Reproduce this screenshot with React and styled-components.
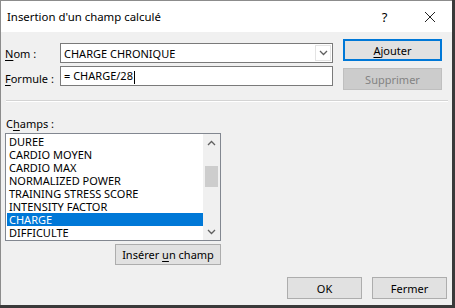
import React from "react";
import styled, { createGlobalStyle } from "styled-components";

const Global = createGlobalStyle`
  html, body { margin: 0; padding: 0; background: #3a3a3a; }
  body { font-family: "Noto Sans", "Liberation Sans", sans-serif; }
`;

const Window = styled.div`
  width: 452px;
  height: 305px;
  box-sizing: border-box;
  border-top: 1px solid #8c8c8c;
  border-left: 1px solid #8c8c8c;
  background: #f0f0f0;
  display: flex;
  flex-direction: column;
  font-size: 11px;
  color: #000;
`;

const TitleBar = styled.div`
  height: 31px;
  background: #fff;
  display: flex;
  align-items: center;
  padding-left: 6px;
`;

const Title = styled.div`
  flex: 1;
  font-size: 11.4px;
`;

const TitleButton = styled.div`
  width: 45px;
  display: flex;
  justify-content: center;
  font-size: 13px;
`;

const Body = styled.div`
  flex: 1;
  padding: 7px 0 0 4px;
  display: flex;
  flex-direction: column;
`;

const FormGrid = styled.div`
  display: grid;
  grid-template-columns: 55px 273px 99px;
  grid-template-rows: 24px 24px;
  row-gap: 3px;
  & > :nth-child(3n) { margin-left: 10px; }
`;

const Label = styled.label`
  align-self: center;
  margin-top: ${(p) => p.$mt || 0}px;
  white-space: nowrap;
`;

const U = styled.span`
  text-decoration: underline;
  text-underline-offset: 2px;
`;

const Field = styled.div`
  height: 20px;
  box-sizing: border-box;
  margin-top: ${(p) => p.$mt || 0}px;
  background: #fff;
  border: 1px solid #7a7a7a;
  display: flex;
  align-items: center;
  padding-left: 3px;
`;

const FieldText = styled.span`
  flex: 1;
  white-space: nowrap;
`;

const Caret = styled.span`
  display: inline-block;
  width: 1px;
  height: 13px;
  background: #000;
  vertical-align: middle;
  margin-left: 1px;
`;

const DropButton = styled.div`
  width: 16px;
  height: 16px;
  margin-right: 1px;
  box-sizing: border-box;
  border: 1px solid #e3e3e3;
  display: flex;
  align-items: center;
  justify-content: center;
`;

const Button = styled.button`
  font: inherit;
  font-size: 11px;
  width: ${(p) => p.$w || 99}px;
  height: ${(p) => p.$h || 22}px;
  margin-top: ${(p) => p.$mt || 0}px;
  padding: 0;
  box-sizing: border-box;
  background: ${(p) => (p.$disabled ? "#cccccc" : "#e1e1e1")};
  color: ${(p) => (p.$disabled ? "#838383" : "#000")};
  border: 1px solid ${(p) => (p.$default ? "#0078d7" : p.$disabled ? "#bfbfbf" : "#adadad")};
  box-shadow: ${(p) => (p.$default ? "inset 0 0 0 1px #0078d7" : "none")};
  display: flex;
  align-items: center;
  justify-content: center;
  white-space: nowrap;
`;

const Separator = styled.div`
  height: 1px;
  background: #d4d4d4;
  margin: 10px 4px 0 1px;
  border-bottom: 1px solid #fff;
`;

const ChampsLabel = styled.div`
  margin-top: 14px;
  padding-left: 1px;
  height: 16px;
  line-height: 16px;
`;

const ListArea = styled.div`
  width: 216px;
  margin-top: 1px;
  display: flex;
  flex-direction: column;
  align-items: flex-end;
`;

const ListBox = styled.div`
  width: 216px;
  height: 108px;
  box-sizing: border-box;
  border: 1px solid #828790;
  background: #fff;
  display: flex;
`;

const Items = styled.div`
  flex: 1;
  padding: 1px 0 0 1px;
  overflow: hidden;
`;

const Item = styled.div`
  height: 13px;
  line-height: 13px;
  padding-left: 2px;
  white-space: nowrap;
  background: ${(p) => (p.$sel ? "#0078d7" : "transparent")};
  color: ${(p) => (p.$sel ? "#fff" : "#000")};
`;

const ScrollBar = styled.div`
  width: 17px;
  background: #f0f0f0;
  display: flex;
  flex-direction: column;
  align-items: center;
`;

const Arrow = styled.div`
  height: 17px;
  width: 17px;
  display: flex;
  align-items: center;
  justify-content: center;
`;

const Track = styled.div`
  flex: 1;
  width: 13px;
  padding-top: 15px;
`;

const Thumb = styled.div`
  width: 13px;
  height: 21px;
  background: #cdcdcd;
`;

const InsertWrap = styled.div`
  margin-top: 3px;
`;

const Footer = styled.div`
  display: flex;
  justify-content: flex-end;
  gap: 10px;
  padding-right: 5px;
  margin-top: 12px;
`;

const Chevron = ({ up }) => (
  <svg width="9" height="6" viewBox="0 0 9 6">
    <path
      d={up ? "M1 5 L4.5 1.5 L8 5" : "M1 1 L4.5 4.5 L8 1"}
      fill="none"
      stroke="#606060"
      strokeWidth="1.3"
    />
  </svg>
);

const items = [
  "DUREE",
  "CARDIO MOYEN",
  "CARDIO MAX",
  "NORMALIZED POWER",
  "TRAINING STRESS SCORE",
  "INTENSITY FACTOR",
  "CHARGE",
  "DIFFICULTE",
];

export default function App() {
  return (
    <>
      <Global />
      <Window>
        <TitleBar>
          <Title>Insertion d'un champ calculé</Title>
          <TitleButton>?</TitleButton>
          <TitleButton>
            <svg width="12" height="12" viewBox="0 0 12 12">
              <path d="M1 1 L11 11 M11 1 L1 11" stroke="#222" strokeWidth="1" />
            </svg>
          </TitleButton>
        </TitleBar>
        <Body>
          <FormGrid>
            <Label $mt={4}>
              <U>N</U>om :
            </Label>
            <Field $mt={4}>
              <FieldText>CHARGE CHRONIQUE</FieldText>
              <DropButton>
                <Chevron />
              </DropButton>
            </Field>
            <Button $default>
              <span>
                <U>A</U>jouter
              </span>
            </Button>
            <Label>
              <U>F</U>ormule :
            </Label>
            <Field>
              <FieldText>
                = CHARGE/28
                <Caret />
              </FieldText>
            </Field>
            <Button $disabled $mt={2}>
              Supprimer
            </Button>
          </FormGrid>
          <Separator />
          <ChampsLabel>
            C<U>h</U>amps :
          </ChampsLabel>
          <ListArea>
            <ListBox>
              <Items>
                {items.map((it) => (
                  <Item key={it} $sel={it === "CHARGE"}>
                    {it}
                  </Item>
                ))}
              </Items>
              <ScrollBar>
                <Arrow>
                  <Chevron up />
                </Arrow>
                <Track>
                  <Thumb />
                </Track>
                <Arrow>
                  <Chevron />
                </Arrow>
              </ScrollBar>
            </ListBox>
            <InsertWrap>
              <Button $w={106} $h={21}>
                <span>
                  Insérer <U>u</U>n champ
                </span>
              </Button>
            </InsertWrap>
          </ListArea>
          <Footer>
            <Button $w={75} $h={22}>OK</Button>
            <Button $w={75} $h={22}>Fermer</Button>
          </Footer>
        </Body>
      </Window>
    </>
  );
}
